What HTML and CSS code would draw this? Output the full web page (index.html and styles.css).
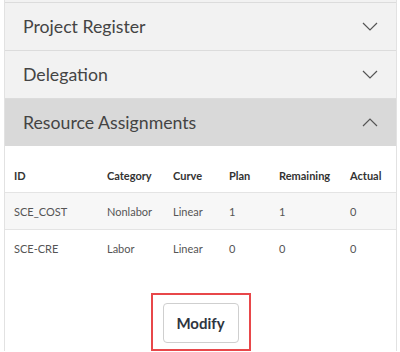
FILE: index.html
```
<html>
    <head>
        <meta charset="UTF-8">
        <link rel="stylesheet" href="styles.css">
    </head>
    <body>
        <div class="panel">
            <div class="stub"></div>
            <div class="acc-head">
                <span>Project Register</span>
                <svg class="chev" width="16" height="9" viewBox="0 0 16 9"><polyline points="1,1 8,8 15,1"/></svg>
            </div>
            <div class="acc-head">
                <span>Delegation</span>
                <svg class="chev" width="16" height="9" viewBox="0 0 16 9"><polyline points="1,1 8,8 15,1"/></svg>
            </div>
            <div class="acc-head open">
                <span>Resource Assignments</span>
                <svg class="chev" width="16" height="9" viewBox="0 0 16 9"><polyline points="1,8 8,1 15,8"/></svg>
            </div>
            <div class="acc-body">
                <div class="grid head-row">
                    <div>ID</div><div>Category</div><div>Curve</div><div>Plan</div><div>Remaining</div><div>Actual</div>
                </div>
                <div class="grid data-row shaded">
                    <div>SCE_COST</div><div>Nonlabor</div><div>Linear</div><div>1</div><div>1</div><div>0</div>
                </div>
                <div class="grid data-row">
                    <div>SCE-CRE</div><div>Labor</div><div>Linear</div><div>0</div><div>0</div><div>0</div>
                </div>
                <div class="actions">
                    <div class="highlight">
                        <button class="btn">Modify</button>
                    </div>
                </div>
            </div>
        </div>
    </body>
</html>
```

FILE: styles.css
```
body {
    margin: 0;
    background: #fff;
    font-family: "Lato", "Open Sans", sans-serif;
}

.panel {
    margin: 0 3px 0 4px;
    border-left: 1px solid #e2e2e2;
    border-right: 1px solid #e2e2e2;
}

.stub {
    height: 2px;
    background: #f2f2f2;
}

.acc-head {
    display: flex;
    align-items: center;
    justify-content: space-between;
    height: 47px;
    border-top: 1px solid #dcdcdc;
    background: #f2f2f2;
    padding: 0 18px 0 18px;
    font-size: 17.7px;
    color: #444;
}

.acc-head.open {
    background: #d9d9d9;
}

.chev polyline {
    fill: none;
    stroke: #555;
    stroke-width: 1.2;
}

.acc-body {
    padding-top: 12px;
}

.grid {
    display: grid;
    grid-template-columns: 93px 66px 56px 50px 71px 1fr;
    align-items: center;
    padding-left: 9px;
    font-size: 11px;
}

.head-row {
    height: 34px;
    border-bottom: 1px solid #e4e4e4;
    color: #333;
    font-weight: 700;
}

.data-row {
    height: 36px;
    color: #555;
}

.data-row.shaded {
    background: #f7f7f7;
    border-bottom: 1px solid #e4e4e4;
}

.actions {
    display: flex;
    justify-content: center;
    padding-top: 27px;
}

.highlight {
    border: 2px solid #e8474a;
    padding: 8px 10px 6px 10px;
}

.btn {
    width: 76px;
    height: 40px;
    background: #fff;
    border: 1px solid #cfcfcf;
    border-radius: 4px;
    font-family: "Lato", "Open Sans", sans-serif;
    font-size: 15px;
    font-weight: 700;
    color: #2f3540;
}
```
